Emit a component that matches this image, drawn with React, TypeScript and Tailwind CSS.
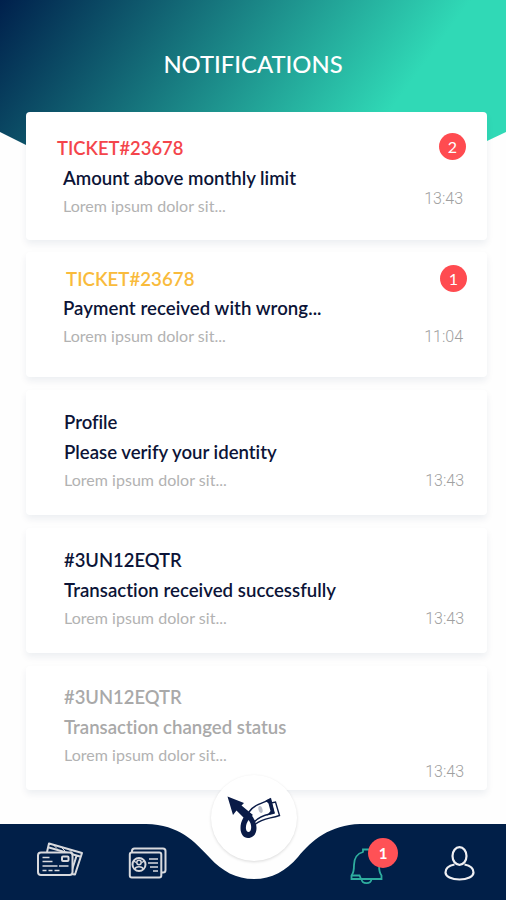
import clsx from "clsx"

interface Notification {
  id: number
  title: string
  message: string
  preview: string
  time: string
  badge?: number
  card: string
  titleClass: string
  messageClass: string
  timeClass: string
}

const notifications: Notification[] = [
  {
    id: 1,
    title: "TICKET#23678",
    message: "Amount above monthly limit",
    preview: "Lorem ipsum dolor sit...",
    time: "13:43",
    badge: 2,
    card: "h-[128px] pt-[21px] pl-[37px] pr-[21px]",
    titleClass: "mt-px -ml-[6px] text-[18.4px] text-[#f4454b]",
    messageClass: "mt-[2px] text-[#0c1437]",
    timeClass: "mt-[29px] mr-[3px]",
  },
  {
    id: 2,
    title: "TICKET#23678",
    message: "Payment received with wrong...",
    preview: "Lorem ipsum dolor sit...",
    time: "11:04",
    badge: 1,
    card: "mt-[12px] h-[125px] pt-[13px] pl-[37px] pr-[20px]",
    titleClass: "ml-[3px] text-[18.7px] text-[#f9bb3c]",
    messageClass: "mt-[1px] tracking-[0.06px] text-[#0c1437]",
    timeClass: "mt-[35px] mr-[4px]",
  },
  {
    id: 3,
    title: "Profile",
    message: "Please verify your identity",
    preview: "Lorem ipsum dolor sit...",
    time: "13:43",
    card: "mt-[13px] h-[125px] pt-[18px] pl-[38px] pr-[23px]",
    titleClass: "text-[18.5px] text-[#0c1437]",
    messageClass: "mt-[2px] text-[#0c1437]",
    timeClass: "mt-[63px]",
  },
  {
    id: 4,
    title: "#3UN12EQTR",
    message: "Transaction received successfully",
    preview: "Lorem ipsum dolor sit...",
    time: "13:43",
    card: "mt-[13px] h-[125px] pt-[18px] pl-[38px] pr-[23px]",
    titleClass: "text-[18.4px] text-[#0c1437]",
    messageClass: "mt-[2px] tracking-[0.03px] text-[#0c1437]",
    timeClass: "mt-[63px]",
  },
  {
    id: 5,
    title: "#3UN12EQTR",
    message: "Transaction changed status",
    preview: "Lorem ipsum dolor sit...",
    time: "13:43",
    card: "mt-[13px] h-[124px] pt-[17px] pl-[38px] pr-[23px]",
    titleClass: "text-[18.4px] text-[#a9a9a9]",
    messageClass: "mt-[2px] text-[#a9a9a9]",
    timeClass: "mt-[79px]",
  },
]

function NotificationCard({ item }: { item: Notification }) {
  return (
    <div
      className={clsx(
        "flex justify-between rounded-[4px] bg-white shadow-[0_4px_7px_rgba(20,40,90,0.07)]",
        item.card
      )}
    >
      <div className="whitespace-nowrap">
        <p className={clsx("leading-7 font-semibold", item.titleClass)}>{item.title}</p>
        <p className={clsx("text-[18.6px] leading-7 font-semibold", item.messageClass)}>{item.message}</p>
        <p className="text-[16px] leading-7 tracking-[0.03px] text-[#b2b2b2]">{item.preview}</p>
      </div>
      <div className="flex flex-col items-end">
        {item.badge && (
          <span className="flex h-[27px] w-[27px] items-center justify-center rounded-full bg-[#ff4b50] text-[16px] text-white">
            {item.badge}
          </span>
        )}
        <span
          className={clsx(
            "font-['Roboto',sans-serif] text-[16px] leading-5 font-light text-[#a0a0a0]",
            item.timeClass
          )}
        >
          {item.time}
        </span>
      </div>
    </div>
  )
}

function CardsIcon() {
  return (
    <svg width="48" height="38" viewBox="0 0 48 38" fill="none" stroke="#d9dade" strokeWidth="2">
      <path d="M11 11 L13 2.500 L46 12 L39 33.500 L35 33" strokeLinejoin="round" />
      <path d="M13 6.500 L44 15.500 M40.500 15 L36 29" />
      <path d="M18 4.500l3 3 M26 7l3 3 M34 9.500l3 3" strokeWidth="1" />
      <rect x="2" y="11.500" width="34.500" height="22.500" rx="3" fill="#011f48" />
      <rect x="26" y="15.500" width="6.500" height="4.500" rx="1" />
      <path d="M6.500 16.500h7 M6.500 20.500h10 M6.500 25h15 M23 25h9.500 M6.500 29.500h4 M12.500 29.500h4 M18.500 29.500h5" strokeWidth="1.700" />
    </svg>
  )
}

function IdIcon() {
  return (
    <svg width="40" height="34" viewBox="0 0 40 34" fill="none" stroke="#d9dade" strokeWidth="2">
      <path d="M4 5V4a2.500 2.500 0 0 1 2.500-2.500H35A2.500 2.500 0 0 1 37.500 4V23a2.500 2.500 0 0 1-2.500 2.500H33" />
      <rect x="1.800" y="5.500" width="31.500" height="25" rx="2" fill="#011f48" />
      <circle cx="11" cy="17.500" r="6.500" />
      <circle cx="11" cy="15.500" r="2.200" strokeWidth="1.500" />
      <path d="M7 22c.5-3 7.500-3 8 0 M5 13.500l3 2 M17 13.500l-3 2" strokeWidth="1.500" />
      <path d="M21 12h9 M20 16h10 M22 20h8 M25 24h5" strokeWidth="1.600" />
    </svg>
  )
}

function BellIcon() {
  return (
    <svg width="34" height="38" viewBox="0 0 34 38" fill="none" stroke="#2fae9f" strokeWidth="1.800">
      <path d="M13 4.500V1.500h7v3 M13 4C7.500 5.500 4 10.500 4 17c0 5-.3 8-2.500 10.500V31h30V27.500c-2-2.500-2.500-5.500-2.500-10.500 0-6.500-3-11.500-9-13" />
      <path d="M2 27.500h7.500l1.500 3.500 M11.500 31c.5 5.500 9.500 5.500 10 0" />
    </svg>
  )
}

function UserIcon() {
  return (
    <svg width="32" height="36" viewBox="0 0 32 36" fill="none" stroke="#f0f0f3" strokeWidth="2.200">
      <ellipse cx="15.500" cy="10" rx="7" ry="8.800" />
      <path d="M10.500 18.500C5 19.500 1.500 22.500 1.500 26.500c0 4 6 7 14 7s14-3 14-7c0-4-3.500-7-9-8" />
    </svg>
  )
}

// Arrow with a looped tail in front of two banknotes
function Logo() {
  return (
    <svg width="56" height="46" viewBox="0 0 56 46" fill="none">
      <path d="M29 29.500 C37 23 43 24 53.500 20.500 L49.500 7 L45 8" stroke="#0a1b47" strokeWidth="1.400" />
      <path d="M23 17 C29 8 37 9 44.500 4 L48 18 C41 20 35 20 28 27" fill="#fff" stroke="#0a1b47" strokeWidth="1.500" />
      <path d="M39.500 5.500 L44.500 3 L48.500 18 L41 20.500 L44.500 16 L42.500 8.500 Z" fill="#0a1b47" />
      <ellipse cx="34.500" cy="14.500" rx="2" ry="3.500" fill="#b9bdc9" transform="rotate(-15 34.500 14.500)" />
      <path d="M1.500 1.500 L18 8 L15.500 10.500 L27 20 L20 25 L10.500 15.500 L7 20 Z" fill="#0a1b47" />
      <path
        d="M24 17 C18 20 14.500 26 14.500 33 C14.500 39 17.500 43 22 43 C27 43 30.500 39 30.500 33 C30.500 27 27 21 22 16 Z M22.500 25 C25 28 25.500 31 25 34 C24.500 38 20.500 38 20 34 C19.600 31 20.500 28 22.500 25 Z"
        fill="#0a1b47"
        fillRule="evenodd"
      />
    </svg>
  )
}

export default function App() {
  return (
    <div className="relative flex h-[900px] w-[506px] flex-col overflow-hidden bg-[#fefefe] font-['Lato',sans-serif] [font-variant-ligatures:none]">
      {/* Header */}
      <header className="h-[170px] shrink-0 bg-[linear-gradient(126deg,#00204c_0px,#30d9b6_381px)] pt-[48px] text-center [clip-path:polygon(0_0,506px_0,506px_132px,487px_141px,420px_168px,80px_168px,26px_145px,0_132px)]">
        <h1 className="text-[23.8px] leading-8 font-medium text-white">NOTIFICATIONS</h1>
      </header>

      {/* Notification list */}
      <main className="relative -mt-[58px] flex flex-col pr-[19px] pl-[26px]">
        {notifications.map((item) => (
          <NotificationCard key={item.id} item={item} />
        ))}
      </main>

      {/* Bottom navigation */}
      <nav className="relative mt-[34px] flex h-[76px] shrink-0">
        <svg className="absolute inset-0" width="506" height="76" viewBox="0 0 506 76">
          <path
            d="M0 0H146C180 1 194 17 210 34C222 47 236 55 254 55C272 55 286 47 298 33C312 16 330 1 360 0H506V76H0Z"
            fill="#011f48"
          />
        </svg>
        <div className="relative flex w-full items-start">
          <button className="mt-[17px] ml-[36px]">
            <CardsIcon />
          </button>
          <button className="mt-[23px] ml-[44px]">
            <IdIcon />
          </button>
          <button className="-mt-[49px] ml-[43px] flex h-[86px] w-[86px] items-center justify-center rounded-full bg-white shadow-[0_1px_3px_rgba(0,0,0,0.14)]">
            <Logo />
          </button>
          <button className="relative mt-[24px] ml-[53px]">
            <BellIcon />
            <span className="absolute -top-[10px] left-[18px] flex h-[30px] w-[30px] items-center justify-center rounded-full bg-[#ff5156] text-[15px] font-bold text-white">
              1
            </span>
          </button>
          <button className="mt-[22px] ml-[60px]">
            <UserIcon />
          </button>
        </div>
      </nav>
    </div>
  )
}
